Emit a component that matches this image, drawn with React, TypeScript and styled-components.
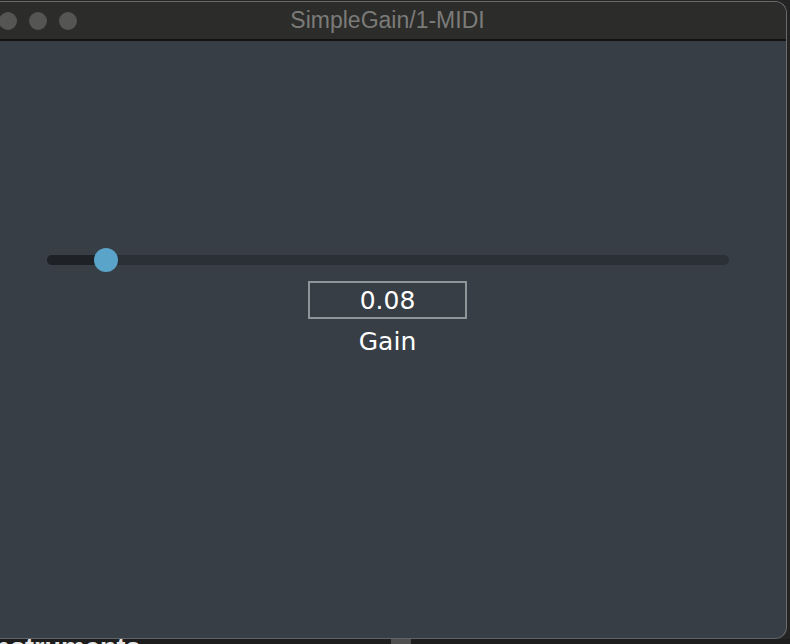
import React from 'react';
import styled, { createGlobalStyle } from 'styled-components';

const GlobalStyle = createGlobalStyle`
	html, body {
		margin: 0;
		padding: 0;
		background: #232323;
		overflow: hidden;
	}
`;

const Page = styled.div`
	width: 790px;
	height: 644px;
	display: flex;
	flex-direction: column;
	overflow: hidden;
	background: #242424;
	padding-top: 1px;
	box-sizing: border-box;
`;

const Window = styled.div`
	width: 799px;
	height: 638px;
	margin-left: -12px;
	flex-shrink: 0;
	display: flex;
	flex-direction: column;
	border: 1px solid #6b6b6b;
	border-bottom-color: #5d6568;
	border-radius: 12px;
	overflow: hidden;
	box-sizing: border-box;
	background: #373e45;
`;

const TitleBar = styled.div`
	height: 37px;
	flex-shrink: 0;
	display: flex;
	align-items: center;
	position: relative;
	background: #2c2c2a;
	border-bottom: 2px solid #121212;
`;

const Lights = styled.div`
	display: flex;
	gap: 12px;
	padding-left: 10px;
`;

const Light = styled.span`
	width: 18px;
	height: 18px;
	border-radius: 50%;
	background: #555553;
`;

const Title = styled.div`
	position: absolute;
	left: 0;
	right: 0;
	top: 0;
	bottom: 0;
	display: flex;
	align-items: center;
	justify-content: center;
	font-family: 'Liberation Sans', Arial, sans-serif;
	font-size: 23px;
	color: #7b7b79;
	pointer-events: none;
`;

const Content = styled.div`
	flex: 1;
	display: flex;
	flex-direction: column;
	align-items: center;
	padding-top: 207px;
`;

const SliderRow = styled.div`
	width: 682px;
	height: 24px;
	position: relative;
	display: flex;
	align-items: center;
`;

const Track = styled.div`
	width: 100%;
	height: 10px;
	border-radius: 5px;
	background: #2a3036;
	overflow: hidden;
	display: flex;
`;

const Fill = styled.div`
	height: 100%;
	background: #1e2226;
`;

const Thumb = styled.div`
	position: absolute;
	top: 0;
	width: 24px;
	height: 24px;
	border-radius: 50%;
	background: #5ba4c9;
`;

const ValueBox = styled.div`
	margin-top: 9px;
	width: 159px;
	height: 38px;
	box-sizing: border-box;
	border: 2px solid #8f9699;
	display: flex;
	align-items: center;
	justify-content: center;
	font-family: 'DejaVu Sans', Verdana, sans-serif;
	font-size: 25px;
	color: #ffffff;
`;

const Label = styled.div`
	margin-top: 8px;
	font-family: 'DejaVu Sans', Verdana, sans-serif;
	font-size: 25px;
	color: #ffffff;
`;

const Below = styled.div`
	flex: 1;
	display: flex;
	align-items: flex-start;
	background: #1d1d1d;
	overflow: hidden;
`;

const BelowText = styled.span`
	font-family: 'Liberation Sans', Arial, sans-serif;
	font-size: 27px;
	font-weight: bold;
	line-height: 1;
	color: #e8e8e8;
	margin-top: -4px;
	margin-left: -14px;
`;

const BelowBlock = styled.span`
	width: 20px;
	height: 6px;
	margin-left: 250px;
	background: #4f4f4f;
`;

export default function App() {
	const value = 0.08;
	const thumbCenter = 59;
	return (
		<>
			<GlobalStyle />
			<Page>
				<Window>
					<TitleBar>
						<Lights>
							<Light />
							<Light />
							<Light />
						</Lights>
						<Title>SimpleGain/1-MIDI</Title>
					</TitleBar>
					<Content>
						<SliderRow>
							<Track>
								<Fill style={{ width: thumbCenter }} />
							</Track>
							<Thumb style={{ left: thumbCenter - 12 }} />
						</SliderRow>
						<ValueBox>{value.toFixed(2)}</ValueBox>
						<Label>Gain</Label>
					</Content>
				</Window>
				<Below>
					<BelowText>Instruments</BelowText>
					<BelowBlock />
				</Below>
			</Page>
		</>
	);
}
